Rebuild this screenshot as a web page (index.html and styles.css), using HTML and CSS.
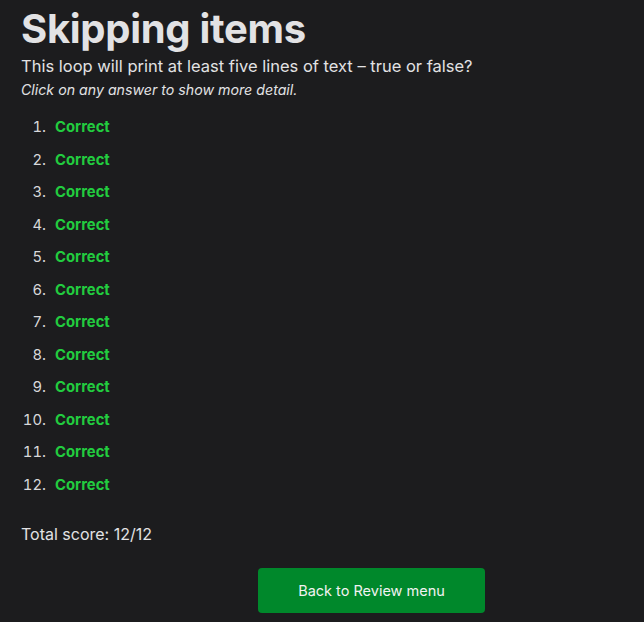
FILE: index.html
```html
<!DOCTYPE html>
<html>
<head>
<meta charset="utf-8">
<link rel="stylesheet" href="styles.css">
</head>
<body>
<main class="page">
  <h1 class="title">Skipping items</h1>
  <p class="question">This loop will print at least five lines of text – true or false?</p>
  <p class="hint">Click on any answer to show more detail.</p>
  <ol class="answers">
    <li><span class="ok">Correct</span></li>
    <li><span class="ok">Correct</span></li>
    <li><span class="ok">Correct</span></li>
    <li><span class="ok">Correct</span></li>
    <li><span class="ok">Correct</span></li>
    <li><span class="ok">Correct</span></li>
    <li><span class="ok">Correct</span></li>
    <li><span class="ok">Correct</span></li>
    <li><span class="ok">Correct</span></li>
    <li><span class="ok">Correct</span></li>
    <li><span class="ok">Correct</span></li>
    <li><span class="ok">Correct</span></li>
  </ol>
  <p class="score">Total score: 12/12</p>
  <div class="actions">
    <button class="back">Back to Review menu</button>
  </div>
</main>
</body>
</html>
```
FILE: styles.css
```css
html, body {
  margin: 0;
  padding: 0;
  background: #1c1c1e;
}
body {
  font-family: Inter, "Noto Sans", sans-serif;
  color: #e2e2e4;
  height: 622px;
  overflow: hidden;
}
.page {
  padding: 5px 21px 0 21px;
}
.title {
  margin: 0;
  font-size: 40px;
  line-height: 48px;
  font-weight: 700;
  letter-spacing: -0.3px;
}
.question {
  margin: 2px 0 0 0;
  font-size: 16.5px;
  line-height: 22px;
}
.hint {
  margin: 4px 0 0 0;
  font-size: 14.2px;
  line-height: 18px;
  font-style: italic;
}
.answers {
  margin: 12px 0 0 0;
  padding-left: 29px;
  font-size: 14.8px;
}
.answers li {
  padding-left: 5px;
  line-height: 32.5px;
}
.answers li::marker {
  color: #d8d8da;
  font-weight: 400;
}
.ok {
  color: #22cc3f;
  font-weight: 700;
}
.score {
  margin: 22px 0 0 0;
  font-size: 16px;
  line-height: 22px;
}
.actions {
  margin-top: 23px;
  padding-left: 237px;
}
.back {
  width: 227px;
  height: 45px;
  border: none;
  border-radius: 4px;
  background: #00882b;
  color: #f2f2f2;
  font-family: Inter, "Noto Sans", sans-serif;
  font-size: 14.5px;
}
```
